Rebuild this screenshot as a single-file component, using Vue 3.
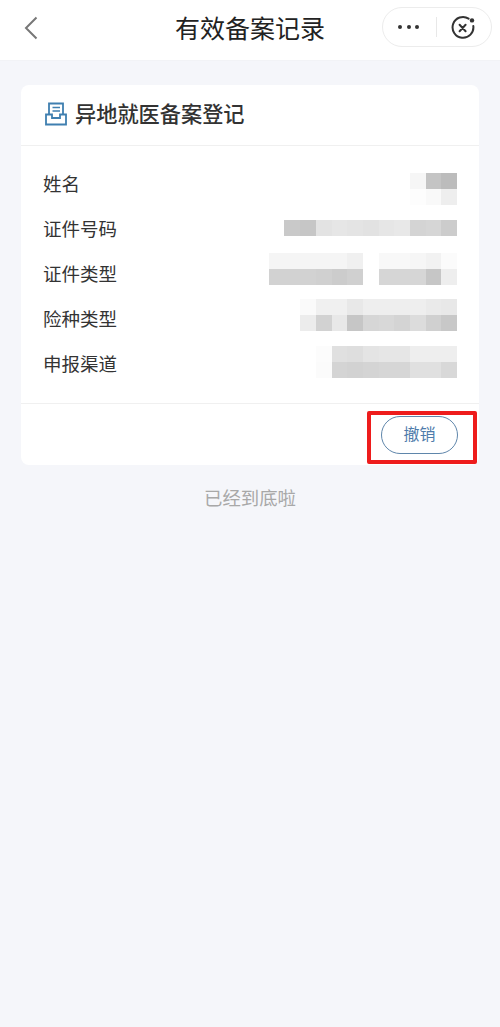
<script setup>
// blurred values: every row is a list of pixelated lines, each cell a grey level
const rows = [
  {
    label: "姓名",
    top: 11,
    lines: [
      ["f6", "c4", "bc"],
      ["fd", "f9", "ee"],
    ],
  },
  {
    label: "证件号码",
    top: 13,
    lines: [["c9", "c6", "e3", "e6", "e4", "e2", "e6", "e8", "d4", "d6", "cc"]],
  },
  {
    label: "证件类型",
    top: 1,
    lines: [
      ["f5", "f5", "f5", "f5", "f5", "f0", "ff", "f8", "f8", "f6", "f2", "fb"],
      ["d2", "d2", "d2", "d0", "cc", "d0", "ff", "d6", "d6", "d6", "c6", "ee"],
    ],
  },
  {
    label: "险种类型",
    top: 2,
    lines: [
      ["fa", "f0", "f0", "e8", "ee", "ee", "ee", "ee", "ea", "e8"],
      ["ec", "d2", "e8", "c6", "d6", "d8", "d4", "dc", "d0", "c8"],
    ],
  },
  {
    label: "申报渠道",
    top: 4,
    lines: [
      ["fc", "e0", "de", "e4", "e6", "e6", "ee", "ee", "ee"],
      ["fb", "d4", "d2", "d4", "d6", "d6", "e0", "e0", "d8"],
    ],
  },
]

const grey = (v) => `#${v}${v}${v}`
</script>

<template>
  <div class="page">
    <header class="nav">
      <button class="back" aria-label="返回">
        <svg width="14" height="24" viewBox="0 0 14 24">
          <path d="M12.5 1.5 L2 12 L12.5 22.5" fill="none" stroke="#777" stroke-width="2" />
        </svg>
      </button>
      <h1 class="nav-title">有效备案记录</h1>
      <div class="capsule">
        <span class="dots"><i></i><i></i><i></i></span>
        <span class="sep"></span>
        <svg class="close" width="26" height="26" viewBox="0 0 26 26">
          <path d="M18.6 3.6 A10.4 10.4 0 1 0 23.3 11" fill="none" stroke="#333" stroke-width="2" stroke-linecap="round" />
          <path d="M9.6 9.8 L15.6 16.2 M15.6 9.8 L9.6 16.2" fill="none" stroke="#333" stroke-width="2" stroke-linecap="round" />
          <circle cx="22" cy="5.4" r="2.2" fill="#333" />
        </svg>
      </div>
    </header>

    <main class="content">
      <section class="card">
        <div class="card-head">
          <svg class="head-icon" width="22" height="24" viewBox="0 0 22 24">
            <path d="M4 12 V1.5 H18 V12" fill="none" stroke="#3f7fb0" stroke-width="1.8" />
            <path d="M7.5 5.5 H15 M7.5 9 H15" fill="none" stroke="#3f7fb0" stroke-width="1.6" />
            <path d="M1 12.5 H7 V16 H15 V12.5 H21 V22.5 H1 Z" fill="none" stroke="#3f7fb0" stroke-width="1.8" />
          </svg>
          <h2 class="card-title">异地就医备案登记</h2>
        </div>

        <div class="info">
          <div class="row" v-for="row in rows" :key="row.label">
            <span class="label">{{ row.label }}</span>
            <div class="mosaic" :style="{ marginTop: row.top + 'px' }">
              <div class="line" v-for="(line, i) in row.lines" :key="i">
                <i
                  v-for="(cell, j) in line"
                  :key="j"
                  :style="{ background: grey(cell) }"
                ></i>
              </div>
            </div>
          </div>
        </div>

        <div class="card-foot">
          <button class="cancel">撤销</button>
          <span class="mark"></span>
        </div>
      </section>

      <p class="end">已经到底啦</p>
    </main>
  </div>
</template>

<style scoped>
.page {
  min-height: 1027px;
  background: #f5f6fa;
  font-family: "Noto Sans CJK SC", "Noto Sans", sans-serif;
  overflow: hidden;
}

.nav {
  height: 61px;
  background: #fff;
  border-bottom: 1px solid #f2f3f6;
  box-sizing: border-box;
  display: grid;
  grid-template-columns: 1fr auto 1fr;
  align-items: start;
  padding: 7px 8px 0;
}

.back {
  appearance: none;
  border: none;
  background: none;
  padding: 0;
  margin: 9px 0 0 16px;
  width: 14px;
  height: 24px;
}

.nav-title {
  margin: 0;
  font-size: 25px;
  line-height: 40px;
  font-weight: 400;
  color: #222;
  text-align: center;
}

.capsule {
  justify-self: end;
  width: 110px;
  height: 40px;
  box-sizing: border-box;
  border: 1px solid #ececec;
  border-radius: 20px;
  background: #fff;
  display: flex;
  align-items: center;
  padding-left: 15px;
}

.dots {
  display: flex;
  gap: 4.5px;
}

.dots i {
  width: 4px;
  height: 4px;
  border-radius: 50%;
  background: #333;
}

.sep {
  width: 1px;
  height: 20px;
  background: #e8e8e8;
  margin: 0 16px 0 17px;
}

.close {
  flex: none;
  margin: 2px 0 0 -3px;
}

.content {
  padding: 24px 21px 0;
}

.card {
  background: #fff;
  border-radius: 8px;
  height: 380px;
  display: flex;
  flex-direction: column;
}

.card-head {
  height: 61px;
  box-sizing: border-box;
  border-bottom: 1px solid #f0f0f0;
  display: flex;
  align-items: center;
  gap: 8px;
  padding: 0 0 6px 24px;
}

.head-icon {
  margin-top: 4px;
}

.card-title {
  margin: 0;
  font-size: 21.2px;
  font-weight: 500;
  color: #333;
}

.info {
  padding-top: 16px;
  height: 257px;
  flex: none;
  box-sizing: border-box;
}

.row {
  height: 45px;
  display: flex;
  justify-content: space-between;
  align-items: flex-start;
  padding: 0 22px;
}

.label {
  font-size: 18.5px;
  line-height: 42px;
  color: #333;
}

.mosaic {
  filter: blur(0.5px);
}

.line {
  display: flex;
  justify-content: flex-end;
}

.line i {
  width: 15.7px;
  height: 16px;
}

.card-foot {
  flex: 1;
  border-top: 1px solid #f0f0f0;
  display: flex;
  justify-content: flex-end;
  padding: 12px 21px 0 0;
  position: relative;
}

.cancel {
  appearance: none;
  width: 77px;
  height: 38px;
  box-sizing: border-box;
  border: 1px solid #5f86ab;
  border-radius: 19px;
  background: #fff;
  color: #4f7cab;
  font-family: inherit;
  font-size: 16px;
  padding: 0 0 4px;
}

.mark {
  position: absolute;
  left: 346px;
  top: 7px;
  width: 110px;
  height: 53px;
  box-sizing: border-box;
  border: 4px solid #ee1c1c;
  border-radius: 2px;
}

.end {
  margin: 19px 0 0;
  font-size: 18.4px;
  line-height: 26px;
  color: #a8a8a8;
  text-align: center;
}
</style>
